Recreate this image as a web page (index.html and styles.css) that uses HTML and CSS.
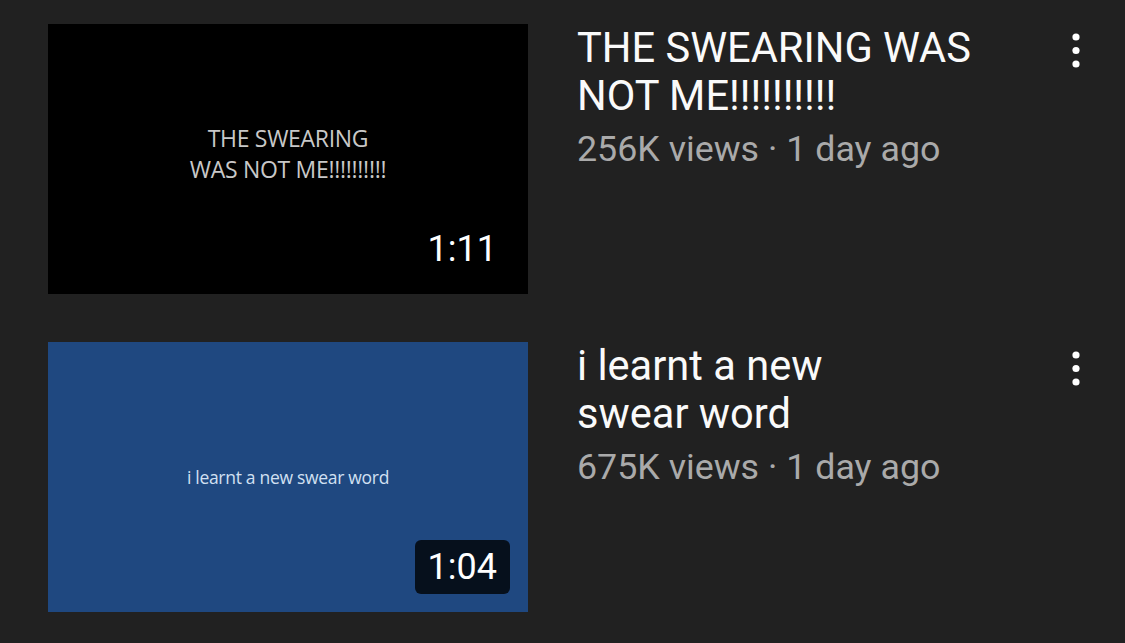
FILE: index.html
```html
<!DOCTYPE html>
<html lang="en">
<head>
<meta charset="utf-8">
<title>Videos</title>
<link rel="stylesheet" href="styles.css">
</head>
<body>
<main class="list">
  <article class="item">
    <div class="thumb thumb-black">
      <div class="thumb-text thumb-text-caps">THE SWEARING<br>WAS NOT ME!!!!!!!!!!</div>
      <span class="duration">1:11</span>
    </div>
    <div class="info">
      <h2 class="title">THE SWEARING WAS NOT ME!!!!!!!!!!</h2>
      <p class="meta">256K views · 1 day ago</p>
    </div>
    <button class="menu" aria-label="More actions">
      <svg width="24" height="48" viewBox="0 0 24 48"><circle cx="12" cy="13" r="3.6" fill="#fff"/><circle cx="12" cy="26.5" r="3.6" fill="#fff"/><circle cx="12" cy="40" r="3.6" fill="#fff"/></svg>
    </button>
  </article>
  <article class="item">
    <div class="thumb thumb-blue">
      <div class="thumb-text thumb-text-small">i learnt a new swear word</div>
      <span class="duration">1:04</span>
    </div>
    <div class="info">
      <h2 class="title">i learnt a new<br>swear word</h2>
      <p class="meta">675K views · 1 day ago</p>
    </div>
    <button class="menu" aria-label="More actions">
      <svg width="24" height="48" viewBox="0 0 24 48"><circle cx="12" cy="13" r="3.6" fill="#fff"/><circle cx="12" cy="26.5" r="3.6" fill="#fff"/><circle cx="12" cy="40" r="3.6" fill="#fff"/></svg>
    </button>
  </article>
</main>
</body>
</html>
```

FILE: styles.css
```css
html, body {
  margin: 0;
  padding: 0;
  background: #212121;
  height: 100%;
  overflow: hidden;
}
body {
  font-family: Roboto, "Liberation Sans", Arial, sans-serif;
}
.list {
  display: flex;
  flex-direction: column;
  gap: 48px;
  padding: 24px 37px 0 48px;
}
.item {
  display: flex;
  align-items: flex-start;
  gap: 49px;
}
.thumb {
  position: relative;
  flex: 0 0 480px;
  width: 480px;
  height: 270px;
  display: flex;
  align-items: center;
  justify-content: center;
}
.thumb-black { background: #000; }
.thumb-blue { background: #1f4880; }
.thumb-text {
  font-family: "Open Sans", "Noto Sans", sans-serif;
  text-align: center;
}
.thumb-text-caps {
  color: #c8c8c8;
  font-size: 23px;
  line-height: 31px;
  letter-spacing: -0.3px;
  margin-top: -11px;
}
.thumb-text-small {
  color: #d2e0f2;
  font-size: 17.5px;
  line-height: 22px;
  letter-spacing: -0.3px;
  margin-top: 0;
}
.duration {
  position: absolute;
  right: 18px;
  bottom: 18px;
  height: 54px;
  line-height: 54px;
  padding: 0 13px;
  border-radius: 6px;
  background: rgba(0, 0, 0, 0.78);
  color: #fff;
  font-size: 36px;
  font-family: Roboto, sans-serif;
}
.info {
  flex: 1;
  min-width: 0;
}
.title {
  margin: 0;
  color: #fafafa;
  font-weight: 400;
  font-size: 41.6px;
  line-height: 48px;
  max-width: 420px;
}
.meta {
  margin: 5px 0 0;
  color: #aaaaaa;
  font-size: 35.8px;
  line-height: 48px;
}
.menu {
  flex: 0 0 24px;
  width: 24px;
  height: 48px;
  padding: 0;
  border: 0;
  background: none;
}
.menu svg { display: block; }
```
